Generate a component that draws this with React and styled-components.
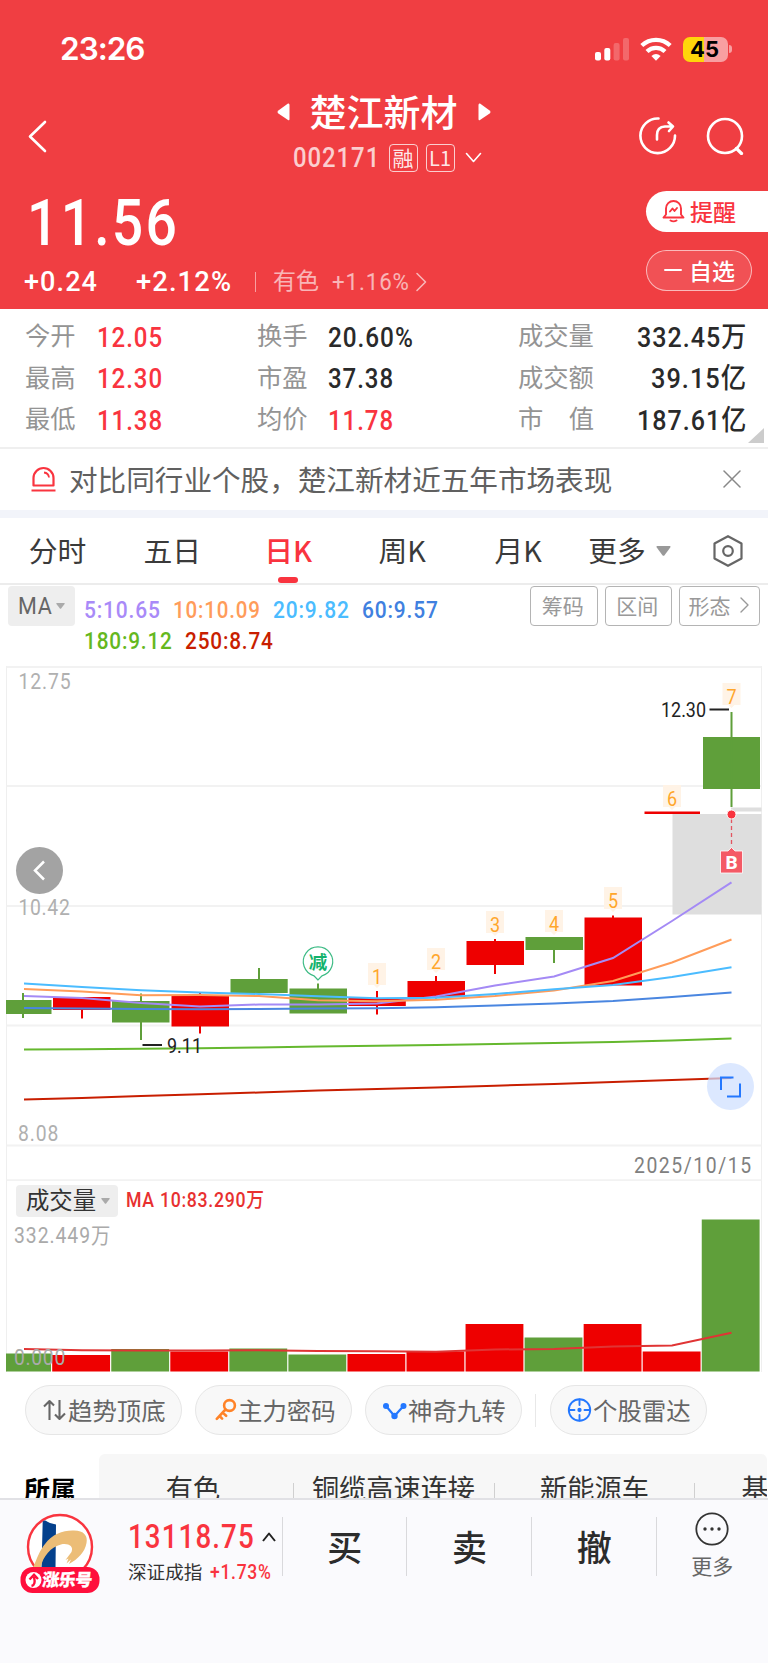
import React, { useLayoutEffect, useRef, useState } from "react";
import styled, { createGlobalStyle } from "styled-components";

const RED = "#f9343f";
const CJK = '"Noto Sans CJK SC", sans-serif';
const NUM = 'Roboto, "Noto Sans CJK SC", sans-serif';

const Global = createGlobalStyle`
  *, *::before, *::after { box-sizing: border-box; }
  body { margin: 0; background: #fff; font-family: ${CJK}; overflow: hidden; }
  svg { display: block; flex: none; }
`;

/* ---------- condensed figures ---------- */

const FigureBox = styled.span`
  display: inline-block;
  flex: none;
  width: ${(p) => p.$w}px;
  margin-left: ${(p) => p.$ml || 0}px;
  height: ${(p) => p.$lh || p.$size}px;
  line-height: ${(p) => p.$lh || p.$size}px;
  font-family: ${NUM};
  font-size: ${(p) => p.$size}px;
  font-weight: ${(p) => p.$weight || 400};
  color: ${(p) => p.$color || "inherit"};
`;
const FigureInk = styled.span`
  display: inline-block;
  white-space: pre;
  letter-spacing: 0.04em;
  transform-origin: 0 50%;
`;

function Figure({ w, size, lh, weight, color, ml, children }) {
  const ref = useRef(null);
  const [scale, setScale] = useState(1);
  useLayoutEffect(() => {
    setScale(w / ref.current.offsetWidth);
  }, [w, size, children]);
  return (
    <FigureBox $w={w} $size={size} $lh={lh} $weight={weight} $color={color} $ml={ml}>
      <FigureInk ref={ref} style={{ transform: `scaleX(${scale})` }}>{children}</FigureInk>
    </FigureBox>
  );
}

/* ---------- shell ---------- */

const Page = styled.div`
  width: 768px;
  height: 1663px;
  display: flex;
  flex-direction: column;
  overflow: hidden;
  background: #fff;
`;

const Header = styled.header`
  height: 309px;
  margin-bottom: 1px;
  background: #f03e42;
  color: #fff;
  flex: none;
`;

const StatusBar = styled.div`
  height: 86px;
  padding: 12px 36px 0 60px;
  display: flex;
  align-items: center;
  justify-content: space-between;
`;
const Clock = styled.div`
  font: 600 31.5px/40px Inter, sans-serif;
  letter-spacing: -1px;
`;
const StatusIcons = styled.div`
  display: flex;
  align-items: center;
`;
const Gap = styled.i`
  flex: none;
  width: ${(p) => p.$w}px;
`;

const NavBar = styled.div`
  height: 98px;
  display: flex;
  padding: 0 24px 0 28px;
  justify-content: space-between;
`;
const NavSide = styled.div`
  width: 104px;
  display: flex;
  align-items: flex-start;
  justify-content: ${(p) => (p.$end ? "flex-end" : "flex-start")};
  gap: 29px;
  padding-top: 31px;
`;
const NavCenter = styled.div`
  width: 306px;
  display: flex;
  flex-direction: column;
  align-items: center;
  padding-right: 5px;
`;
const TitleRow = styled.div`
  display: flex;
  align-items: center;
  gap: 20px;
  height: 52px;
`;
const Title = styled.h1`
  margin: -2px 0 0;
  font-size: 37px;
  font-weight: 500;
  line-height: 52px;
`;
const CodeRow = styled.div`
  display: flex;
  align-items: center;
  height: 40px;
  padding-left: 7px;
`;
const Tag = styled.span`
  width: 29px;
  height: 28px;
  margin-left: ${(p) => p.$ml}px;
  border: 1px solid rgba(255, 255, 255, 0.75);
  border-radius: 4px;
  color: rgba(255, 255, 255, 0.9);
  font-size: ${(p) => p.$size}px;
  line-height: 25px;
  text-align: center;
`;

const QuoteRow = styled.div`
  display: flex;
  justify-content: space-between;
  padding: 7px 0 0 24px;
`;
const QuoteLeft = styled.div`
  display: flex;
  flex-direction: column;
`;
const ChangeRow = styled.div`
  display: flex;
  align-items: center;
  height: 32px;
  margin-top: 9px;
`;
const ChangeDivider = styled.span`
  width: 1px;
  height: 20px;
  margin: 0 17px 0 23px;
  background: rgba(255, 255, 255, 0.5);
`;
const Faded = styled.span`
  display: flex;
  align-items: center;
  opacity: 0.62;
  font-size: 23px;
  line-height: 32px;
`;
const FadedName = styled.span`
  padding-bottom: 5px;
  line-height: 27px;
`;
const QuoteActions = styled.div`
  width: 122px;
  display: flex;
  flex-direction: column;
  gap: 18px;
`;
const ActionPill = styled.button`
  display: flex;
  align-items: center;
  width: ${(p) => (p.$solid ? 122 : 106)}px;
  height: 41px;
  padding: 0 0 ${(p) => (p.$solid ? 1 : 2)}px ${(p) => (p.$solid ? 16 : 17)}px;
  gap: ${(p) => (p.$solid ? 5 : 7)}px;
  border: ${(p) => (p.$solid ? "0" : "1px solid rgba(255,255,255,.6)")};
  border-radius: ${(p) => (p.$solid ? "21px 0 0 21px" : "21px")};
  background: ${(p) => (p.$solid ? "#fff" : "rgba(255,255,255,.1)")};
  color: ${(p) => (p.$solid ? RED : "#fff")};
  font: 500 23px/36px ${CJK};
`;

/* ---------- stats ---------- */

const Stats = styled.section`
  position: relative;
  height: 137px;
  padding: 7px 21px 0 25px;
  flex: none;
`;
const StatRow = styled.div`
  display: grid;
  grid-template-columns: 72px 160px 71px 190px 77px 1fr;
  height: 41.5px;
  align-items: center;
`;
const StatLabel = styled.span`
  display: flex;
  justify-content: space-between;
  width: ${(p) => (p.$wide ? 76 : 51)}px;
  padding-bottom: 6px;
  font-size: 25.3px;
  line-height: 33px;
  white-space: pre;
  color: #949494;
`;
const StatValue = styled.span`
  display: flex;
  justify-content: ${(p) => (p.$end ? "flex-end" : "flex-start")};
`;
const Corner = styled.i`
  position: absolute;
  right: 4px;
  bottom: 4px;
  border-left: 16px solid transparent;
  border-bottom: 15px solid #ccc;
`;

/* ---------- notice ---------- */

const Notice = styled.section`
  display: flex;
  align-items: center;
  flex: none;
  height: 71px;
  padding: 0 27px 2px 31px;
  border-top: 2px solid #efefef;
  border-bottom: 8px solid #f2f4fa;
`;
const NoticeText = styled.span`
  flex: 1;
  margin-left: 13px;
  font-size: 28.6px;
  line-height: 42px;
  color: #606060;
  white-space: nowrap;
`;

/* ---------- tabs ---------- */

const Tabs = styled.nav`
  display: flex;
  flex: none;
  height: 67px;
  padding: 0 25px 0 28.5px;
  border-bottom: 2px solid #ececec;
`;
const Tab = styled.button`
  display: flex;
  flex-direction: column;
  align-items: center;
  width: ${(p) => p.$w}px;
  margin-right: ${(p) => p.$mr}px;
  padding: 0;
  border: 0;
  background: none;
  color: ${(p) => (p.$active ? RED : "#3a3a3a")};
  font: ${(p) => (p.$active ? 500 : 400)} 28.8px/63px ${CJK};
  white-space: nowrap;
  &::after {
    content: "";
    width: 20px;
    height: 6px;
    margin-top: -4px;
    border-radius: 3px;
    background: ${(p) => (p.$active ? RED : "transparent")};
  }
`;
const TabIcon = styled.span`
  display: flex;
  align-items: center;
  height: 65px;
  margin-right: ${(p) => p.$mr || 0}px;
`;

/* ---------- chart header ---------- */

const Indicators = styled.section`
  display: flex;
  flex: none;
  height: 81px;
  padding: 1px 8px 0;
`;
const Select = styled.button`
  display: flex;
  align-items: center;
  justify-content: center;
  gap: ${(p) => p.$gap}px;
  width: ${(p) => p.$w}px;
  height: ${(p) => p.$h}px;
  padding: 0;
  border: 0;
  border-radius: 4px;
  background: #eee;
  color: ${(p) => p.$color};
  font: 400 ${(p) => p.$size}px/${(p) => p.$h}px ${CJK};
`;
const SelectText = styled.span`
  padding: 0 0 3px 2px;
  line-height: 29px;
`;
const Averages = styled.div`
  display: flex;
  flex-direction: column;
  flex: 1;
  padding: 9px 0 0 9px;
`;
const AverageLine = styled.div`
  display: flex;
  gap: 12px;
  height: 30.5px;
`;
const OutlineGroup = styled.div`
  display: flex;
  gap: 7px;
`;
const OutlineButton = styled.button`
  display: flex;
  align-items: center;
  justify-content: center;
  gap: 9px;
  width: ${(p) => p.$w || 67.5}px;
  height: 40px;
  padding: 0 2px 2px 0;
  border: 1px solid #b4b4b4;
  border-radius: 4px;
  background: #fff;
  color: #999;
  font: 400 21px/36px ${CJK};
`;

/* ---------- charts ---------- */

const ChartPanel = styled.section`
  flex: none;
  height: 706px;
  margin: 0 6px;
  border: solid #efefef;
  border-width: 0 1px;
`;
const Plot = styled.svg`
  width: 768px;
  height: ${(p) => p.$h}px;
  margin-left: -7px;
  font-family: ${NUM};
`;
const VolumeHead = styled.div`
  display: flex;
  align-items: center;
  height: 37px;
  padding: 2px 0 0 9px;
`;

/* ---------- pills and sectors ---------- */

const ToolRow = styled.div`
  display: flex;
  flex: none;
  align-items: center;
  height: 82px;
  padding: 0 0 6px 25px;
`;
const ToolPill = styled.button`
  display: flex;
  align-items: center;
  width: 157px;
  height: 50px;
  margin-right: 13px;
  padding: 0 0 0 16px;
  border: 1px solid #e6e6e6;
  border-radius: 25px;
  background: #f8f8f8;
  color: #666;
  font: 400 24.4px/46px ${CJK};
  white-space: nowrap;
  svg { margin-right: 1px; }
`;
const ToolText = styled.span`
  padding-bottom: 1px;
`;
const ToolDivider = styled.i`
  width: 1px;
  height: 33px;
  margin-right: 14px;
  background: #e8e8e8;
`;
const SectorRow = styled.div`
  display: flex;
  flex: none;
  height: 44px;
  overflow: hidden;
`;
const SectorLabel = styled.div`
  width: 99px;
  padding-left: 24px;
  font-weight: 700;
  font-size: 26px;
  line-height: 69px;
`;
const SectorList = styled.div`
  display: flex;
  width: 668px;
  overflow: hidden;
  border-radius: 6px 6px 0 0;
  background: #f7f7f7;
`;
const Sector = styled.div`
  position: relative;
  flex: none;
  width: ${(p) => p.$w}px;
  padding-right: ${(p) => p.$pr ?? 1}px;
  color: #333;
  font-size: 27.2px;
  line-height: 66px;
  text-align: center;
  &::after {
    content: "";
    position: absolute;
    right: 0;
    top: 29px;
    width: 1px;
    height: 20px;
    background: #d0d0d0;
  }
`;

/* ---------- bottom bar ---------- */

const BottomBar = styled.footer`
  display: flex;
  flex: none;
  height: 165px;
  border-top: 2px solid #e1e1e5;
  background: #fafafd;
`;
const LogoSlot = styled.div`
  width: 128px;
  padding: 12px 0 0 20px;
`;
const IndexBlock = styled.div`
  width: 153.5px;
  padding-top: 18px;
`;
const IndexLine = styled.div`
  display: flex;
  align-items: center;
  height: ${(p) => p.$h}px;
  color: #333;
  font-size: 18.6px;
  white-space: nowrap;
`;
const IndexName = styled.span`
  padding-bottom: 3px;
  line-height: 26px;
`;
const TradeButton = styled.button`
  width: 124.7px;
  height: 59px;
  margin-top: 17px;
  padding: 0 0 2px 1px;
  border: 0;
  border-left: 1px solid #d9d9dc;
  background: none;
  color: #2c2c2c;
  font: 500 35px/57px ${CJK};
`;
const MoreButton = styled.button`
  display: flex;
  flex-direction: column;
  align-items: center;
  flex: 1;
  height: 59px;
  margin-top: 17px;
  padding: 0;
  border: 0;
  border-left: 1px solid #d9d9dc;
  background: none;
  color: #666;
  font: 400 21px/30px ${CJK};
  svg { margin: -5px 0 4px; }
`;
const MoreText = styled.span`
  height: 30px;
`;

/* ---------- icons ---------- */

const Stroke = ({ w, h, d, sw = 2, color = "currentColor", fill = "none", children, cap = "round" }) => (
  <svg width={w} height={h} viewBox={`0 0 ${w} ${h}`} fill={fill} stroke={color} strokeWidth={sw} strokeLinecap={cap} strokeLinejoin="round">
    {d && <path d={d} />}
    {children}
  </svg>
);

const Signal = () => (
  <svg width="35" height="24" fill="#fff">
    <rect x="0" y="15" width="6" height="8.5" rx="2" />
    <rect x="9.3" y="11" width="6" height="12.5" rx="2" />
    <rect x="18.6" y="6" width="6" height="17.5" rx="2" opacity=".22" />
    <rect x="28" y="1" width="6" height="22.5" rx="2" opacity=".22" />
  </svg>
);
const Wifi = () => (
  <svg width="32" height="24" viewBox="0 0 32 24" fill="none" stroke="#fff" strokeWidth="4.2">
    <path d="M1.8 8.6 A20.5 20.5 0 0 1 30.2 8.6" />
    <path d="M7 14.6 A12.8 12.8 0 0 1 25 14.6" />
    <path d="M11.4 18.9 Q16 14.9 20.6 18.9 L16 23.8 Z" fill="#fff" stroke="none" />
  </svg>
);
const BatteryShell = styled.div`
  display: flex;
  align-items: center;
  justify-content: center;
  width: 45px;
  height: 25px;
  margin-left: 11px;
  padding-right: 2px;
  border-radius: 7px;
  background: linear-gradient(90deg, #ffd60a 20.5px, #f89fa1 20.5px);
  color: #000;
  font: 700 22px/25px Inter, sans-serif;
`;
const BatteryTip = styled.i`
  width: 3px;
  height: 8px;
  margin-left: 1px;
  border-radius: 0 4px 4px 0;
  background: #f89fa1;
`;
const Caret = ({ w, h, color }) => (
  <svg width={w} height={h} viewBox="0 0 10 6" preserveAspectRatio="none" fill={color}>
    <path d="M.8 0h8.4q.8.2.3.9L5.7 5.5q-.7.7-1.4 0L.5.9Q0 .2.8 0z" />
  </svg>
);

const KeyIcon = () => (
  <Stroke w={22} h={24} sw={2.6} color="#ff8328">
    <circle cx="14.5" cy="7.5" r="5.4" />
    <path d="M10.5 11.5 1.8 20.8M7.7 14.6l3.4 3.2M4.5 18l2.600 2.600" />
  </Stroke>
);

const Logo = () => (
  <svg width="80" height="82" viewBox="0 0 80 82">
    <circle cx="40" cy="35" r="32" fill="#fff" stroke="#f9343f" strokeWidth="2.4" />
    <path d="M22.700 9.500 Q25 7.500 27 9.500 L30 11 L36 12.500 L35.500 56 H21.500 Z" fill="#04408c" />
    <path d="M13 56 C17 46 20 38 25 32 C32 22 44 18 54 18.500 C64 18.500 68 24 66.500 31 C65 40 58 47 49 52 L51 47.500 L46.500 51.500 L48.500 46.500 L45.500 48 L51.500 40 C54 34 48 31 41 32.500 C31 35 23 44 20.500 56 Z" fill="#ecbd77" />
    <rect x="0.500" y="55" width="79" height="26" rx="12" fill="#ff0f3c" />
    <circle cx="13.500" cy="68" r="8" fill="#fff" />
    <path d="M11.500 74 Q16 73 14 65 M9.500 67.500 14 62.800 18 67" fill="none" stroke="#ff0f3c" strokeWidth="2.400" />
    <text x="22" y="74.500" fontSize="17" fontWeight="900" fontFamily='"Noto Sans CJK SC"' fill="#fff" stroke="#fff" strokeWidth=".3" textLength="50" transform="skewX(-6) translate(7.500 0)">涨乐号</text>
  </svg>
);

/* ---------- data ---------- */

const UP = "#ee0000";
const DOWN = "#5f9f3a";

const candles = [
  [DOWN, 6, 51.5, 1000, 1014, 23, 993, 1018],
  [UP, 53, 110.5, 997, 1010, 82, 997, 1018.5],
  [DOWN, 112, 169.5, 1001, 1022.5, 141, 993.5, 1040],
  [UP, 171.5, 229, 996, 1026.5, 200, 993, 1033.5],
  [DOWN, 230.5, 287.7, 979, 993, 259, 968, 994],
  [DOWN, 289.5, 347, 988.5, 1013.5, 318, 983.5, 1013],
  [UP, 348.5, 405.8, 998, 1006, 377, 991, 1014.5],
  [UP, 407.5, 465, 981, 997, 436, 976, 998.5],
  [UP, 466.5, 524, 941, 965, 495, 939, 974],
  [DOWN, 525.5, 583, 937, 950, 554, 937, 963],
  [UP, 584.5, 642, 917.5, 985.5, 613, 915.5, 980],
  [UP, 644.5, 700, 811.5, 814, 672, 812, 813],
  [DOWN, 703, 760, 737, 789, 731.5, 712, 807],
];
const xs = [24, 82, 141, 200, 259, 318, 377, 436, 495, 554, 613, 672, 731.5];
const averages = [
  ["#65b82e", [1049.5, 1049.2, 1048.8, 1048.2, 1047.4, 1046.5, 1045.7, 1044.9, 1044, 1043, 1042, 1040.5, 1038.5]],
  ["#c81e00", [1099.5, 1098, 1096, 1094.2, 1092.5, 1090.6, 1089, 1087.5, 1085.7, 1084, 1082, 1080, 1078]],
  ["#4a86e0", [1008, 1008.5, 1009, 1009.3, 1009, 1008.6, 1008.3, 1007.2, 1005.5, 1003.5, 1001, 997, 992.5]],
  ["#a48af5", [996, 998, 1003, 1006.5, 1004.5, 1004.5, 1003.5, 996.5, 985.5, 976.5, 958, 921, 882.3]],
  ["#ff9c5a", [989, 991.5, 995.3, 995, 996, 1000.3, 1001.2, 999.7, 996, 990.5, 981, 962.5, 939.5]],
  ["#4bbcff", [983.5, 987, 990.3, 992.5, 994, 996.2, 998.3, 997.8, 994, 989.3, 985, 977, 967.3]],
];
const counts = [
  [1, 377, 963], [2, 436, 948], [3, 495, 911], [4, 554, 910], [5, 613, 887], [6, 672, 785], [7, 731.5, 683],
];
const volumeTops = [1353.5, 1355, 1349, 1351.5, 1348.5, 1354.5, 1354, 1351.5, 1324, 1337.5, 1324, 1351.5, 1219.5];
const volumeAverage = [1349, 1350.2, 1350.5, 1350.5, 1350.3, 1351, 1351.3, 1351.8, 1349.5, 1349, 1346.5, 1345.6, 1332.8];

const line = (ys) => xs.map((x, i) => `${x},${ys[i]}`).join(" ");

const PriceChart = () => (
  <Plot $h={515} viewBox="0 666 768 515">
    {[667, 786, 906, 1025.5, 1145.5, 1180.2].map((y) => (
      <path key={y} d={`M6.500 ${y}H761.500`} stroke="#f2f2f2" strokeWidth="2" />
    ))}
    <rect x="731" y="807.5" width="30.5" height="4" fill="#dedede" />
    <rect x="672.500" y="814" width="89" height="100.5" fill="#dedede" />
    {candles.map(([c, x1, x2, y1, y2, wx, w1, w2]) => (
      <g key={wx} fill={c}>
        <rect x={x1} y={y1} width={x2 - x1} height={y2 - y1} />
        <rect x={wx - 1} y={w1} width="2" height={w2 - w1} />
      </g>
    ))}
    {averages.map(([c, ys]) => (
      <polyline key={c} points={line(ys)} fill="none" stroke={c} strokeWidth="2" />
    ))}
    {counts.map(([n, x, y]) => (
      <g key={n}>
        <path d={`M${x - 9} ${y}h18v22h-6l-3 3-3-3h-6z`} fill="#fff3e6" />
        <text transform={`translate(${x} ${y + 21}) scale(.9 1)`} fontSize="20" fill="#ffa62b" textAnchor="middle">{n}</text>
      </g>
    ))}
    <g fill="#b0b0b0" fontSize="21.500">
      <text transform="translate(18.500 688.500) scale(.9 1)" textLength="58">12.75</text>
      <text transform="translate(18.500 914.500) scale(.9 1)" textLength="57">10.42</text>
      <text transform="translate(18 1140.500) scale(.9 1)" textLength="45">8.08</text>
    </g>
    <text transform="translate(634 1172.500) scale(.88 1)" fontSize="22" textLength="133" fill="#808080">2025/10/15</text>
    <text x="661" y="717" fontSize="20" textLength="45" lengthAdjust="spacingAndGlyphs" fill="#222">12.30</text>
    <text x="167" y="1052.500" fontSize="20" textLength="35" lengthAdjust="spacingAndGlyphs" fill="#222">9.11</text>
    <path d="M709.500 709.500H729M142.500 1045H162" stroke="#222" strokeWidth="2" />
    <path d="M318 980l-4-4.200A14.700 14.700 0 1 1 322 975.800z" fill="#fff" stroke="#3dbb85" strokeWidth="1.200" />
    <text x="318" y="969" fontSize="18.500" fontWeight="700" fill="#12b26c" textAnchor="middle">减</text>
    <path d="M731.500 819V846" stroke="#e25560" strokeWidth="1.300" strokeDasharray="4 3" />
    <circle cx="731.500" cy="814.500" r="4.500" fill="#f9343f" stroke="#fff" strokeWidth="1" />
    <path d="M720.500 851h7.500l3.500-3.500 3.500 3.500h7.500v22h-22z" fill="#f45a66" stroke="#fff" strokeWidth=".8" />
    <text x="731.500" y="868.500" fontSize="19" fontWeight="800" fill="#fff" textAnchor="middle">B</text>
    <circle cx="39.500" cy="870.500" r="23.500" fill="#a3a3a3" />
    <path d="M44 861.500l-9 9 9 9" fill="none" stroke="#fff" strokeWidth="2.500" />
    <circle cx="730.500" cy="1086.500" r="23.500" fill="#cfdfff" fillOpacity=".72" />
    <path d="M733.500 1077.500H721V1090M727 1096.500H740V1083.500" fill="none" stroke="#2478ff" strokeWidth="2" />
  </Plot>
);

const VolumeChart = () => (
  <Plot $h={154} viewBox="0 1218 768 154">
    {volumeTops.map((y, i) => {
      const left = i === 0 ? 6 : 52.2 + (i - 1) * 59.05;
      const right = 51 + i * 59.05;
      return <rect key={i} x={left} y={y} width={right - left} height={1371.5 - y} fill={candles[i][0]} />;
    })}
    <polyline points={line(volumeAverage)} fill="none" stroke="#e03434" strokeWidth="2" />
    <text transform="translate(14 1243) scale(.9 1)" fontSize="21.500" textLength="107" fill="#aaa">332.449万</text>
    <text transform="translate(14 1364.500) scale(.9 1)" fontSize="21.500" textLength="57" fill="#aaa">0.000</text>
  </Plot>
);

const stats = [
  [["今开", "12.05", 66, RED], ["换手", "20.60%", 86, "#2a2a2a"], ["成交量", "332.45万", 110]],
  [["最高", "12.30", 66, RED], ["市盈", "37.38", 66, "#2a2a2a"], ["成交额", "39.15亿", 96]],
  [["最低", "11.38", 66, RED], ["均价", "11.78", 66, RED], ["市值", "187.61亿", 110]],
];

/* ---------- app ---------- */

export default function App() {
  return (
    <Page>
      <Global />
      <Header>
        <StatusBar>
          <Clock>23:26</Clock>
          <StatusIcons>
            <Signal />
            <Gap $w={10} />
            <Wifi />
            <BatteryShell>45</BatteryShell>
            <BatteryTip />
          </StatusIcons>
        </StatusBar>
        <NavBar>
          <NavSide>
            <Stroke w={20} h={38} sw={2.6} d="M17 5 2 19.500 17 34" />
          </NavSide>
          <NavCenter>
            <TitleRow>
              <svg width="13" height="18" fill="#fff"><path d="M11 .5Q12.500 0 12.500 2V16Q12.500 18 11 17L1 10.200Q0 9 1 7.800z" /></svg>
              <Title>楚江新材</Title>
              <svg width="13" height="18" fill="#fff"><path d="M2 .5Q.5 0 .5 2V16Q.5 18 2 17L12 10.200Q13 9 12 7.800z" /></svg>
            </TitleRow>
            <CodeRow>
              <Figure w={87} size={28} lh={34} weight={500} color="rgba(255,255,255,.75)">002171</Figure>
              <Tag $ml={9} $size={21}>融</Tag>
              <Tag $ml={8} $size={20}>L1</Tag>
              <Gap $w={10} />
              <Stroke w={17} h={12} sw={1.6} d="M1.500 1.500 8.500 9.500 15.500 1.500" />
            </CodeRow>
          </NavCenter>
          <NavSide $end>
            <Stroke w={38} h={38} sw={2.6}>
              <path d="M19.500 1.500A17.300 17.300 0 1 0 36 18.500" />
              <path d="M18 22.500V18q0-8 8-8.500h7M29.500 5.500 34 9.500l-4 4.500" />
            </Stroke>
            <Stroke w={38} h={38} sw={2.6}>
              <circle cx="19" cy="19" r="17" />
              <path d="M30.500 31.500 35.500 36.500" strokeWidth="3.200" />
            </Stroke>
          </NavSide>
        </NavBar>
        <QuoteRow>
          <QuoteLeft>
            <Figure w={152} size={64} lh={66} weight={500} ml={3}>11.56</Figure>
            <ChangeRow>
              <Figure w={74} size={28.5} lh={32} weight={500}>+0.24</Figure>
              <Figure w={96} size={28.5} lh={32} weight={500} ml={38}>+2.12%</Figure>
              <ChangeDivider />
              <Faded>
                <FadedName>有色</FadedName>
                <Figure w={78} size={24} lh={32} ml={13}>+1.16%</Figure>
                <Gap $w={5} />
                <Stroke w={12} h={20} sw={1.6} d="M2 1.500 10.500 10 2 18.500" />
              </Faded>
            </ChangeRow>
          </QuoteLeft>
          <QuoteActions>
            <ActionPill $solid>
              <Stroke w={23} h={24} sw={1.9}>
                <path d="M1.500 18.500H21.500L19 15.500V9.500a7.500 7.500 0 0 0-15 0v6zM8.500 21.500q3 1.800 6 0" />
                <path d="M8 12.500 10.500 9.500l2 2.500 2.500-3" />
              </Stroke>
              提醒
            </ActionPill>
            <ActionPill>
              <Stroke w={18} h={4} d="M1 2H17" />
              自选
            </ActionPill>
          </QuoteActions>
        </QuoteRow>
      </Header>

      <Stats>
        {stats.map(([a, b, c]) => (
          <StatRow key={a[0]}>
            <StatLabel>{a[0]}</StatLabel>
            <Figure w={a[2]} size={28} lh={36} weight={500} color={a[3]}>{a[1]}</Figure>
            <StatLabel>{b[0]}</StatLabel>
            <Figure w={b[2]} size={28} lh={36} weight={500} color={b[3]}>{b[1]}</Figure>
            <StatLabel $wide>{c[0].length === 2 ? [...c[0]].map((t) => <span key={t}>{t}</span>) : c[0]}</StatLabel>
            <StatValue $end>
              <Figure w={c[2]} size={28} lh={36} weight={500} color="#2a2a2a">{c[1]}</Figure>
            </StatValue>
          </StatRow>
        ))}
        <Corner />
      </Stats>

      <Notice>
        <Stroke w={25} h={26} sw={2.2} color={RED} cap="butt">
          <path d="M2.500 19.500V12a10 10 0 0 1 20 0v7.500zM.5 24.500h24" />
          <path d="M13 6.500q4.500.500 5 5" strokeWidth="1.800" />
        </Stroke>
        <NoticeText>对比同行业个股，楚江新材近五年市场表现</NoticeText>
        <Stroke w={18} h={18} sw={1.5} color="#888" d="M1 1 17 17M17 1 1 17" />
      </Notice>

      <Tabs>
        <Tab $w={58} $mr={57}>分时</Tab>
        <Tab $w={58} $mr={62}>五日</Tab>
        <Tab $w={50} $mr={64} $active>日K</Tab>
        <Tab $w={50} $mr={66}>周K</Tab>
        <Tab $w={50} $mr={45}>月K</Tab>
        <Tab $w={58} $mr={10}>更多</Tab>
        <TabIcon $mr={42}><Caret w={15} h={10} color="#999" /></TabIcon>
        <TabIcon>
          <Stroke w={30} h={32} sw={2.2} color="#666">
            <path d="M15 1.200 28.500 8.500V23.500L15 30.800 1.500 23.500V8.500z" />
            <circle cx="15" cy="16" r="4.800" />
          </Stroke>
        </TabIcon>
      </Tabs>

      <Indicators>
        <Select $w={67} $h={40} $gap={3} $size={23.5} $color="#666">
          <Figure w={35} size={24} lh={38}>MA</Figure>
          <Caret w={9} h={6} color="#aaa" />
        </Select>
        <Averages>
          <AverageLine>
            <Figure w={77} size={24.5} lh={30} weight={500} color="#a98af8">5:10.65</Figure>
            <Figure w={88} size={24.5} lh={30} weight={500} color="#ff9c5a">10:10.09</Figure>
            <Figure w={77} size={24.5} lh={30} weight={500} color="#4bbcff">20:9.82</Figure>
            <Figure w={77} size={24.5} lh={30} weight={500} color="#4080e0">60:9.57</Figure>
          </AverageLine>
          <AverageLine>
            <Figure w={89} size={24.5} lh={29} weight={500} color="#65b81e">180:9.12</Figure>
            <Figure w={89} size={24.5} lh={29} weight={500} color="#c81e00">250:8.74</Figure>
          </AverageLine>
        </Averages>
        <OutlineGroup>
          <OutlineButton>筹码</OutlineButton>
          <OutlineButton>区间</OutlineButton>
          <OutlineButton $w={81}>
            形态
            <Stroke w={9} h={16} sw={1.4} d="M1 1 8 8 1 15" />
          </OutlineButton>
        </OutlineGroup>
      </Indicators>

      <ChartPanel>
        <PriceChart />
        <VolumeHead>
          <Select $w={102} $h={32} $gap={5} $size={23.4} $color="#333">
            <SelectText>成交量</SelectText>
            <Caret w={9} h={6} color="#aaa" />
          </Select>
          <Figure w={139} size={20.5} lh={33} weight={500} ml={8} color="#e83030">MA 10:83.290万</Figure>
        </VolumeHead>
        <VolumeChart />
      </ChartPanel>

      <ToolRow>
        <ToolPill>
          <Stroke w={25} h={24} sw={2.1} cap="butt" d="M7.500 22V3M2 8.500 7.500 3 12 7.500M17.500 2V21M13 16.500 17.500 21 23 15.500" />
          <ToolText>趋势顶底</ToolText>
        </ToolPill>
        <ToolPill>
          <Gap $w={3} />
          <KeyIcon />
          <ToolText>主力密码</ToolText>
        </ToolPill>
        <ToolPill>
          <Stroke w={25} h={24} sw={2.2} color="#2478ff">
            <path d="M4 8 12.500 18 21.500 8" />
            <g fill="#2478ff" stroke="none">
              <circle cx="4" cy="8" r="3" />
              <circle cx="12.500" cy="18" r="3.200" />
              <circle cx="21.500" cy="8" r="3" />
            </g>
          </Stroke>
          <ToolText>神奇九转</ToolText>
        </ToolPill>
        <ToolDivider />
        <ToolPill>
          <Stroke w={25} h={24} sw={1.9} color="#2478ff">
            <circle cx="12.500" cy="12" r="10.700" />
            <path d="M12.500 1.500V7M12.500 17v5.500M2 12H7.500M17.500 12H23" />
            <circle cx="12.500" cy="12" r="1.200" fill="#2478ff" />
          </Stroke>
          <ToolText>个股雷达</ToolText>
        </ToolPill>
      </ToolRow>

      <SectorRow>
        <SectorLabel>所属</SectorLabel>
        <SectorList>
          <Sector $w={195} $pr={7}>有色</Sector>
          <Sector $w={201} $pr={2}>铜缆高速连接</Sector>
          <Sector $w={200}>新能源车</Sector>
          <Sector $w={120} $pr={0}>基</Sector>
        </SectorList>
      </SectorRow>

      <BottomBar>
        <LogoSlot><Logo /></LogoSlot>
        <IndexBlock>
          <IndexLine $h={38}>
            <Figure w={127} size={32.5} lh={37} weight={500} color={RED}>13118.75</Figure>
            <Gap $w={7} />
            <Stroke w={14} h={10} sw={2} color="#222" cap="butt" d="M1 9 7 1.500 13 9" />
          </IndexLine>
          <IndexLine $h={32}>
            <IndexName>深证成指</IndexName>
            <Figure w={62} size={19.5} lh={29} weight={500} ml={8} color={RED}>+1.73%</Figure>
          </IndexLine>
        </IndexBlock>
        <TradeButton>买</TradeButton>
        <TradeButton>卖</TradeButton>
        <TradeButton>撤</TradeButton>
        <MoreButton>
          <Stroke w={34} h={34} sw={1.8} color="#333">
            <circle cx="17" cy="17" r="15.700" />
            <g fill="#333" stroke="none">
              <circle cx="10" cy="17" r="1.700" />
              <circle cx="17" cy="17" r="1.700" />
              <circle cx="24" cy="17" r="1.700" />
            </g>
          </Stroke>
          <MoreText>更多</MoreText>
        </MoreButton>
      </BottomBar>
    </Page>
  );
}
